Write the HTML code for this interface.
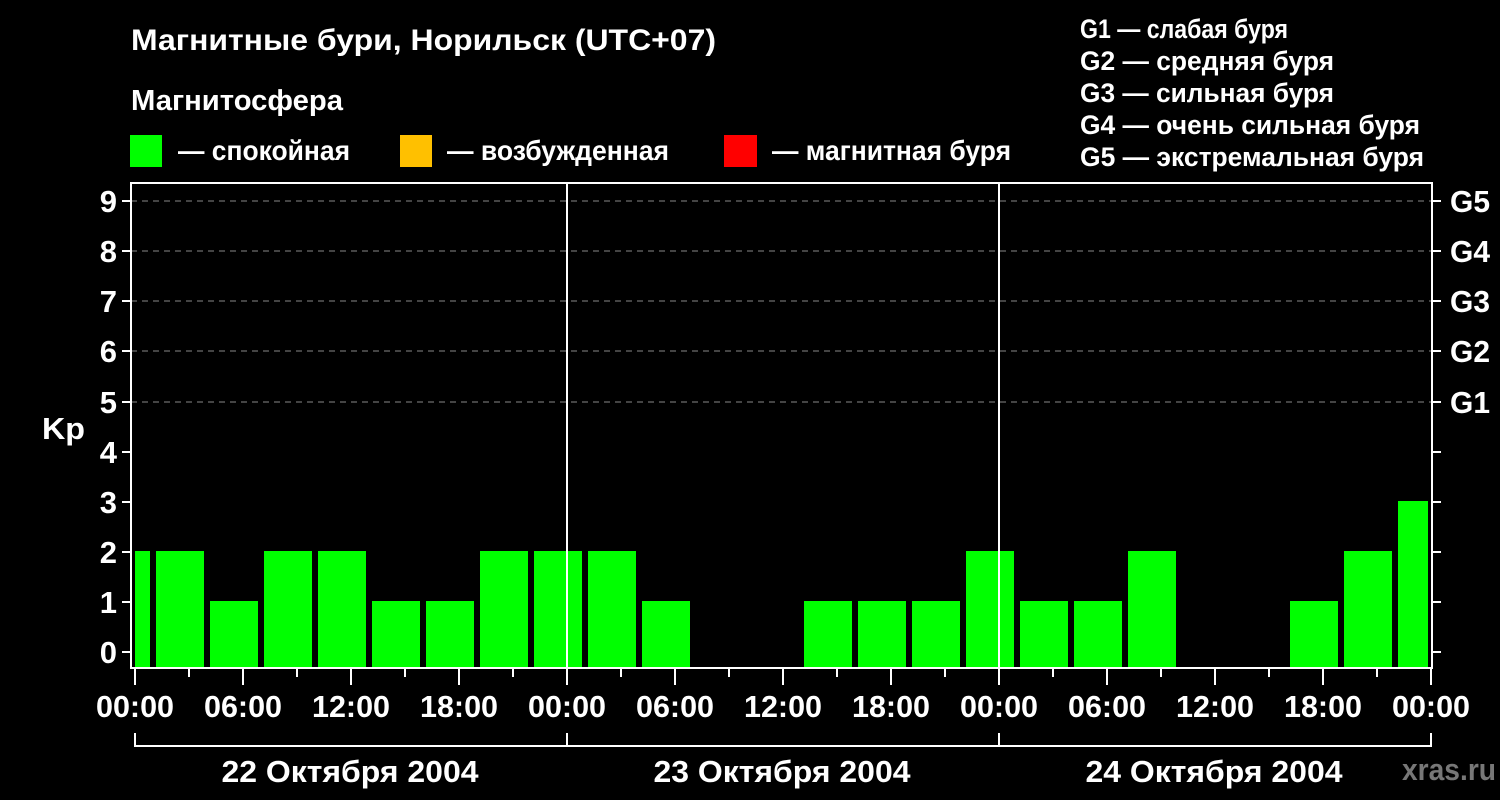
<!DOCTYPE html>
<html><head><meta charset="utf-8"><style>
html,body{margin:0;padding:0;background:#000;}
svg{display:block;}
text{font-family:"Liberation Sans",Arial,sans-serif;font-weight:bold;fill:#fff;}
</style></head><body>
<svg width="1500" height="800" xmlns="http://www.w3.org/2000/svg">
<rect width="1500" height="800" fill="#000"/>
<text x="131" y="50" font-size="30" textLength="585" lengthAdjust="spacingAndGlyphs">Магнитные бури, Норильск (UTC+07)</text>
<text x="131" y="110" font-size="29" textLength="212" lengthAdjust="spacingAndGlyphs">Магнитосфера</text>
<rect x="130" y="135" width="32" height="32" fill="#00ff00"/>
<text x="178" y="160" font-size="28" textLength="172" lengthAdjust="spacingAndGlyphs">— спокойная</text>
<rect x="400" y="135" width="32" height="32" fill="#ffc000"/>
<text x="447" y="160" font-size="28" textLength="222" lengthAdjust="spacingAndGlyphs">— возбужденная</text>
<rect x="724" y="135" width="33" height="32" fill="#ff0000"/>
<text x="772" y="160" font-size="28" textLength="239" lengthAdjust="spacingAndGlyphs">— магнитная буря</text>
<g font-size="27">
<text x="1080" y="38" textLength="208" lengthAdjust="spacingAndGlyphs">G1 — слабая буря</text>
<text x="1080" y="70" textLength="254" lengthAdjust="spacingAndGlyphs">G2 — средняя буря</text>
<text x="1080" y="102" textLength="254" lengthAdjust="spacingAndGlyphs">G3 — сильная буря</text>
<text x="1080" y="134" textLength="340" lengthAdjust="spacingAndGlyphs">G4 — очень сильная буря</text>
<text x="1080" y="166" textLength="344" lengthAdjust="spacingAndGlyphs">G5 — экстремальная буря</text>
</g>
<g stroke="#888" stroke-width="1" stroke-dasharray="6,5">
<line x1="131" y1="201" x2="1432" y2="201"/>
<line x1="131" y1="251" x2="1432" y2="251"/>
<line x1="131" y1="301" x2="1432" y2="301"/>
<line x1="131" y1="351" x2="1432" y2="351"/>
<line x1="131" y1="402" x2="1432" y2="402"/>
</g>
<g fill="#00ff00">
<rect x="135" y="551" width="15" height="117"/>
<rect x="156" y="551" width="48" height="117"/>
<rect x="210" y="601" width="48" height="67"/>
<rect x="264" y="551" width="48" height="117"/>
<rect x="318" y="551" width="48" height="117"/>
<rect x="372" y="601" width="48" height="67"/>
<rect x="426" y="601" width="48" height="67"/>
<rect x="480" y="551" width="48" height="117"/>
<rect x="534" y="551" width="48" height="117"/>
<rect x="588" y="551" width="48" height="117"/>
<rect x="642" y="601" width="48" height="67"/>
<rect x="804" y="601" width="48" height="67"/>
<rect x="858" y="601" width="48" height="67"/>
<rect x="912" y="601" width="48" height="67"/>
<rect x="966" y="551" width="48" height="117"/>
<rect x="1020" y="601" width="48" height="67"/>
<rect x="1074" y="601" width="48" height="67"/>
<rect x="1128" y="551" width="48" height="117"/>
<rect x="1290" y="601" width="48" height="67"/>
<rect x="1344" y="551" width="48" height="117"/>
<rect x="1398" y="501" width="30" height="167"/>
</g>
<g stroke="#fff" stroke-width="2" fill="none">
<line x1="131" y1="183" x2="1433" y2="183"/>
<line x1="131" y1="182" x2="131" y2="669"/>
<line x1="1432" y1="182" x2="1432" y2="669"/>
<line x1="130" y1="668" x2="1433" y2="668"/>
<line x1="567" y1="183" x2="567" y2="668"/>
<line x1="999" y1="183" x2="999" y2="668"/>
</g>
<g stroke="#fff" stroke-width="2">
<line x1="122" y1="201" x2="131" y2="201"/><line x1="122" y1="251" x2="131" y2="251"/>
<line x1="122" y1="301" x2="131" y2="301"/><line x1="122" y1="351" x2="131" y2="351"/>
<line x1="122" y1="402" x2="131" y2="402"/><line x1="122" y1="452" x2="131" y2="452"/>
<line x1="122" y1="502" x2="131" y2="502"/><line x1="122" y1="552" x2="131" y2="552"/>
<line x1="122" y1="602" x2="131" y2="602"/><line x1="122" y1="652" x2="131" y2="652"/>
<line x1="1432" y1="201" x2="1441" y2="201"/><line x1="1432" y1="251" x2="1441" y2="251"/>
<line x1="1432" y1="301" x2="1441" y2="301"/><line x1="1432" y1="351" x2="1441" y2="351"/>
<line x1="1432" y1="402" x2="1441" y2="402"/><line x1="1432" y1="452" x2="1441" y2="452"/>
<line x1="1432" y1="502" x2="1441" y2="502"/><line x1="1432" y1="552" x2="1441" y2="552"/>
<line x1="1432" y1="602" x2="1441" y2="602"/><line x1="1432" y1="652" x2="1441" y2="652"/>
</g>
<g font-size="31" text-anchor="end">
<text x="117" y="212">9</text><text x="117" y="262">8</text><text x="117" y="312">7</text>
<text x="117" y="362">6</text><text x="117" y="413">5</text><text x="117" y="463">4</text>
<text x="117" y="513">3</text><text x="117" y="563">2</text><text x="117" y="613">1</text>
<text x="117" y="663">0</text>
</g>
<text x="42" y="439" font-size="31" textLength="43" lengthAdjust="spacingAndGlyphs">Kp</text>
<g font-size="31">
<text x="1450" y="212" textLength="40" lengthAdjust="spacingAndGlyphs">G5</text>
<text x="1450" y="262" textLength="40" lengthAdjust="spacingAndGlyphs">G4</text>
<text x="1450" y="312" textLength="40" lengthAdjust="spacingAndGlyphs">G3</text>
<text x="1450" y="362" textLength="40" lengthAdjust="spacingAndGlyphs">G2</text>
<text x="1450" y="413" textLength="40" lengthAdjust="spacingAndGlyphs">G1</text>
</g>
<g stroke="#fff" stroke-width="2">
<line x1="135" y1="669" x2="135" y2="685"/><line x1="189" y1="669" x2="189" y2="677"/>
<line x1="243" y1="669" x2="243" y2="685"/><line x1="297" y1="669" x2="297" y2="677"/>
<line x1="351" y1="669" x2="351" y2="685"/><line x1="405" y1="669" x2="405" y2="677"/>
<line x1="459" y1="669" x2="459" y2="685"/><line x1="513" y1="669" x2="513" y2="677"/>
<line x1="567" y1="669" x2="567" y2="685"/><line x1="621" y1="669" x2="621" y2="677"/>
<line x1="675" y1="669" x2="675" y2="685"/><line x1="729" y1="669" x2="729" y2="677"/>
<line x1="783" y1="669" x2="783" y2="685"/><line x1="837" y1="669" x2="837" y2="677"/>
<line x1="891" y1="669" x2="891" y2="685"/><line x1="945" y1="669" x2="945" y2="677"/>
<line x1="999" y1="669" x2="999" y2="685"/><line x1="1053" y1="669" x2="1053" y2="677"/>
<line x1="1107" y1="669" x2="1107" y2="685"/><line x1="1161" y1="669" x2="1161" y2="677"/>
<line x1="1215" y1="669" x2="1215" y2="685"/><line x1="1269" y1="669" x2="1269" y2="677"/>
<line x1="1323" y1="669" x2="1323" y2="685"/><line x1="1377" y1="669" x2="1377" y2="677"/>
<line x1="1431" y1="669" x2="1431" y2="685"/>
</g>
<g font-size="31" text-anchor="middle">
<text x="135" y="717" textLength="78" lengthAdjust="spacingAndGlyphs">00:00</text>
<text x="243" y="717" textLength="78" lengthAdjust="spacingAndGlyphs">06:00</text>
<text x="351" y="717" textLength="78" lengthAdjust="spacingAndGlyphs">12:00</text>
<text x="459" y="717" textLength="78" lengthAdjust="spacingAndGlyphs">18:00</text>
<text x="567" y="717" textLength="78" lengthAdjust="spacingAndGlyphs">00:00</text>
<text x="675" y="717" textLength="78" lengthAdjust="spacingAndGlyphs">06:00</text>
<text x="783" y="717" textLength="78" lengthAdjust="spacingAndGlyphs">12:00</text>
<text x="891" y="717" textLength="78" lengthAdjust="spacingAndGlyphs">18:00</text>
<text x="999" y="717" textLength="78" lengthAdjust="spacingAndGlyphs">00:00</text>
<text x="1107" y="717" textLength="78" lengthAdjust="spacingAndGlyphs">06:00</text>
<text x="1215" y="717" textLength="78" lengthAdjust="spacingAndGlyphs">12:00</text>
<text x="1323" y="717" textLength="78" lengthAdjust="spacingAndGlyphs">18:00</text>
<text x="1431" y="717" textLength="78" lengthAdjust="spacingAndGlyphs">00:00</text>
</g>
<g stroke="#fff" stroke-width="2" fill="none">
<polyline points="135,733 135,746 1431,746 1431,733"/>
<line x1="567" y1="733" x2="567" y2="746"/>
<line x1="999" y1="733" x2="999" y2="746"/>
</g>
<g font-size="31" text-anchor="middle">
<text x="350" y="782" textLength="257" lengthAdjust="spacingAndGlyphs">22 Октября 2004</text>
<text x="782" y="782" textLength="257" lengthAdjust="spacingAndGlyphs">23 Октября 2004</text>
<text x="1214" y="782" textLength="257" lengthAdjust="spacingAndGlyphs">24 Октября 2004</text>
</g>
<text x="1402" y="780" font-size="31" textLength="94" lengthAdjust="spacingAndGlyphs" style="fill:#777">xras.ru</text>
</svg>
</body></html>
